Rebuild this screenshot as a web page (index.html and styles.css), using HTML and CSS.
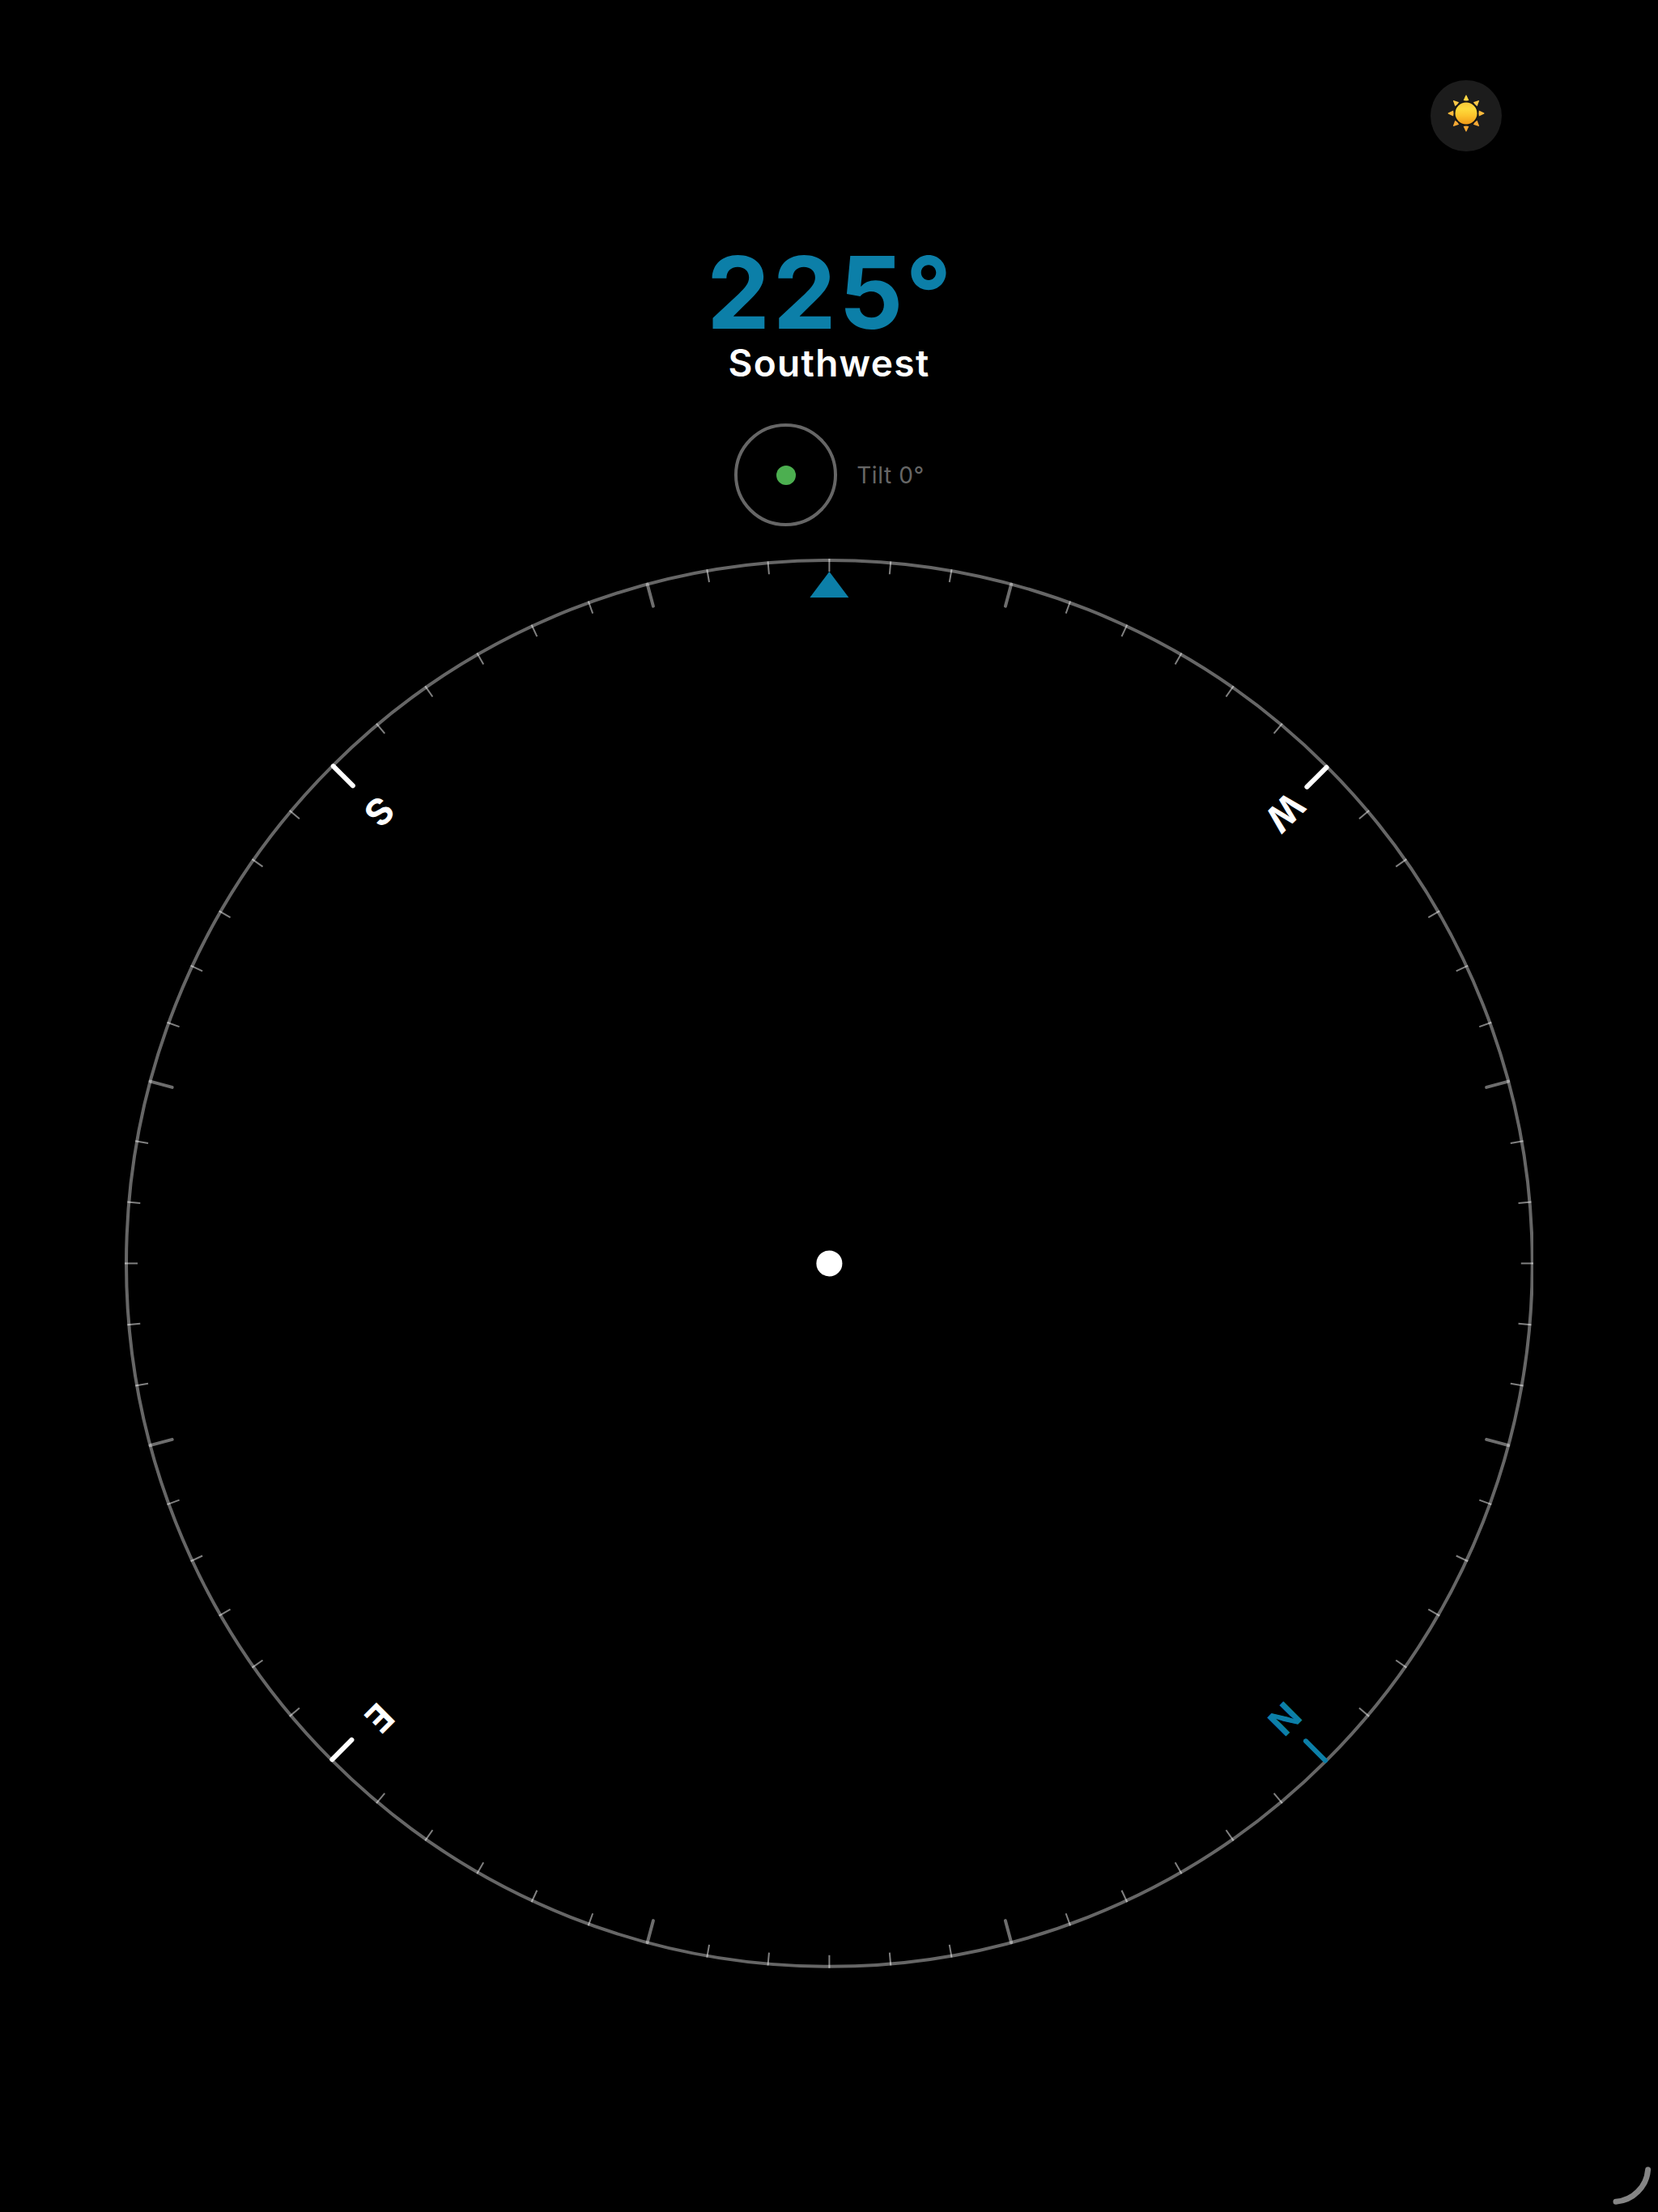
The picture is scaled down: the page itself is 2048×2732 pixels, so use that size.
FILE: index.html
```html
<!DOCTYPE html>
<html lang="en">
<head>
<meta charset="utf-8">
<title>Compass</title>
<link rel="stylesheet" href="styles.css">
</head>
<body>
<main class="screen">
  <header class="toolbar">
    <button class="theme-toggle" aria-label="Toggle theme">
      <svg class="sun" viewBox="-24 -24 48 48">
        <defs>
          <linearGradient id="disc" x1="0" y1="0" x2="0" y2="1">
            <stop offset="0" stop-color="#fbc93a"/>
            <stop offset="0.3" stop-color="#fedb3c"/>
            <stop offset="0.6" stop-color="#fcc42c"/>
            <stop offset="1" stop-color="#f19a18"/>
          </linearGradient>
          <path id="ray" d="M-.4-22.4H.4L3.4-15.9Q0-15-3.4-15.9Z"/>
        </defs>
        <circle r="14.6" fill="#15130f"/>
        <circle r="13.5" fill="url(#disc)"/>
        <use href="#ray" fill="#fdd644"/>
        <g fill="#fbc846"><use href="#ray" transform="rotate(45)"/><use href="#ray" transform="rotate(-45)"/></g>
        <g fill="#fab93c"><use href="#ray" transform="rotate(90)"/><use href="#ray" transform="rotate(-90)"/></g>
        <g fill="#f6a935"><use href="#ray" transform="rotate(135)"/><use href="#ray" transform="rotate(-135)"/><use href="#ray" transform="rotate(180)"/></g>
      </svg>
    </button>
  </header>

  <section class="readout">
    <div class="heading">225°</div>
    <div class="direction">Southwest</div>
  </section>

  <section class="level">
    <div class="level-ring"><div class="level-bubble"></div></div>
    <div class="level-label">Tilt 0°</div>
  </section>

  <svg class="dial" viewBox="-870 -870 1740 1740">
    <defs>
      <path id="minor" d="M-1-870h2v16h-2z"/>
      <rect id="major" x="-2" y="-870" width="4" height="32" rx="2" fill-opacity="0.85"/>
      <rect id="cardinal" x="-2" y="-870" width="6" height="40" rx="3"/>
      <g id="quarter">
        <use href="#minor"/>
        <use href="#minor" transform="rotate(5)"/>
        <use href="#minor" transform="rotate(10)"/>
        <use href="#major" transform="rotate(15)"/>
        <use href="#minor" transform="rotate(20)"/>
        <use href="#minor" transform="rotate(25)"/>
        <use href="#minor" transform="rotate(30)"/>
        <use href="#minor" transform="rotate(35)"/>
        <use href="#minor" transform="rotate(40)"/>
        <use href="#minor" transform="rotate(50)"/>
        <use href="#minor" transform="rotate(55)"/>
        <use href="#minor" transform="rotate(60)"/>
        <use href="#minor" transform="rotate(65)"/>
        <use href="#minor" transform="rotate(70)"/>
        <use href="#major" transform="rotate(75)"/>
        <use href="#minor" transform="rotate(80)"/>
        <use href="#minor" transform="rotate(85)"/>
      </g>
    </defs>
    <circle class="ring" r="868"/>
    <g class="ticks">
      <use href="#quarter"/>
      <use href="#quarter" transform="rotate(90)"/>
      <use href="#quarter" transform="rotate(180)"/>
      <use href="#quarter" transform="rotate(270)"/>
    </g>
    <g class="point">
      <use href="#cardinal" transform="rotate(-45)"/>
      <text transform="translate(-555.5 -558) rotate(135)" y="16">S</text>
    </g>
    <g class="point">
      <use href="#cardinal" transform="rotate(45)"/>
      <text transform="translate(562.5 -557) rotate(135)" y="16">W</text>
    </g>
    <g class="point">
      <use href="#cardinal" transform="rotate(-135)"/>
      <text transform="translate(-555.5 561) rotate(135)" y="16">E</text>
    </g>
    <g class="point north">
      <use href="#cardinal" transform="rotate(135)"/>
      <text transform="translate(562 562) rotate(135)" y="16">N</text>
    </g>
    <path class="pointer" d="M0-854 24-822H-24Z"/>
    <circle class="hub" r="16"/>
  </svg>

  <svg class="corner" viewBox="0 0 48 48">
    <path d="M4 43.3A43 43 0 0 0 43.6 3.7"/>
  </svg>
</main>
</body>
</html>
```
FILE: styles.css
```css
* { box-sizing: border-box; }

body {
  margin: 0;
  background: #000;
  color: #fff;
  font-family: Inter, "Liberation Sans", sans-serif;
}

.screen {
  position: relative;
  width: 2048px;
  height: 2732px;
  display: flex;
  flex-direction: column;
  align-items: center;
  overflow: hidden;
}

.toolbar {
  align-self: stretch;
  display: flex;
  justify-content: flex-end;
  padding: 99px 193px 0 0;
}

.theme-toggle {
  width: 88px;
  height: 88px;
  padding: 0 0 7px;
  border: 0;
  border-radius: 50%;
  background: #1c1c1c;
  display: flex;
  align-items: center;
  justify-content: center;
}

.sun { width: 48px; height: 48px; }

.readout {
  height: 336px;
  padding-top: 108px;
  text-align: center;
  white-space: nowrap;
}

.heading {
  height: 125px;
  padding-left: 4px;
  line-height: 132px;
  font-size: 124px;
  font-weight: 700;
  letter-spacing: 3.5px;
  color: #0c7fa8;
}

.direction {
  line-height: 57px;
  font-size: 46px;
  font-weight: 600;
  letter-spacing: 1.3px;
}

.level {
  display: flex;
  align-items: center;
  gap: 24px;
  height: 127px;
  padding-left: 1px;
}

.level-ring {
  width: 127px;
  height: 127px;
  border: 4px solid #666;
  border-radius: 50%;
  display: grid;
  place-items: center;
}

.level-bubble {
  width: 24px;
  height: 24px;
  border-radius: 50%;
  background: #4caf50;
}

.level-label {
  padding-top: 1px;
  font-size: 28px;
  letter-spacing: 0.6px;
  color: #666;
}

.dial {
  width: 1740.8px;
  height: 1740.8px;
  margin-top: 40px;
  flex: none;
}

.ring { fill: none; stroke: rgba(255, 255, 255, 0.4); stroke-width: 4; }
.ticks { fill: rgba(255, 255, 255, 0.5); }
.point { fill: #fff; }
.north, .pointer { fill: #0c7fa8; }
.hub { fill: #fff; }

.point text {
  font-size: 45px;
  font-weight: 700;
  text-anchor: middle;
}

.corner {
  position: absolute;
  right: 8px;
  bottom: 8px;
  width: 48px;
  height: 48px;
  fill: none;
  stroke: #858585;
  stroke-width: 7;
  stroke-linecap: round;
}
```
